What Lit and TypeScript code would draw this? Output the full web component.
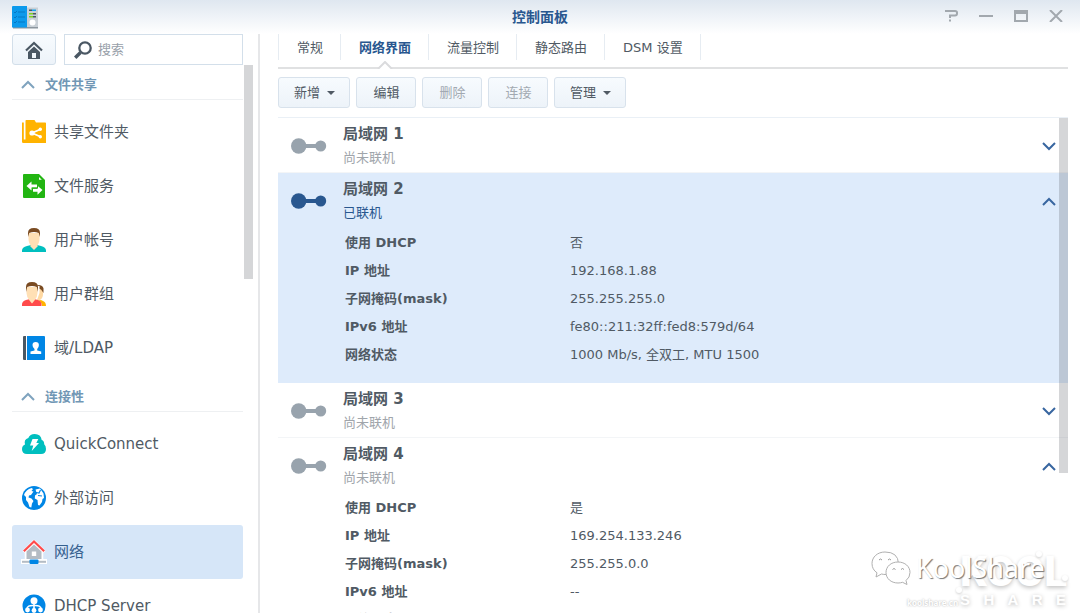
import { LitElement, html, css, svg, nothing } from "lit";
import { customElement, state } from "lit/decorators.js";
import { classMap } from "lit/directives/class-map.js";

interface NavItem { id: string; label: string; }
interface NavGroup { title: string; items: NavItem[]; }
interface Lan { name: string; online: boolean; details: [string, string][]; }

const NAV: NavGroup[] = [
  {
    title: "文件共享",
    items: [
      { id: "folder", label: "共享文件夹" },
      { id: "file", label: "文件服务" },
      { id: "user", label: "用户帐号" },
      { id: "group", label: "用户群组" },
      { id: "ldap", label: "域/LDAP" },
    ],
  },
  {
    title: "连接性",
    items: [
      { id: "quick", label: "QuickConnect" },
      { id: "globe", label: "外部访问" },
      { id: "network", label: "网络" },
      { id: "dhcp", label: "DHCP Server" },
    ],
  },
];

const TABS = ["常规", "网络界面", "流量控制", "静态路由", "DSM 设置"];

const ACTIONS = [
  { label: "新增", menu: true, disabled: false },
  { label: "编辑", menu: false, disabled: false },
  { label: "删除", menu: false, disabled: true },
  { label: "连接", menu: false, disabled: true },
  { label: "管理", menu: true, disabled: false },
];

const LANS: Lan[] = [
  { name: "局域网 1", online: false, details: [] },
  {
    name: "局域网 2",
    online: true,
    details: [
      ["使用 DHCP", "否"],
      ["IP 地址", "192.168.1.88"],
      ["子网掩码(mask)", "255.255.255.0"],
      ["IPv6 地址", "fe80::211:32ff:fed8:579d/64"],
      ["网络状态", "1000 Mb/s, 全双工, MTU 1500"],
    ],
  },
  { name: "局域网 3", online: false, details: [] },
  {
    name: "局域网 4",
    online: false,
    details: [
      ["使用 DHCP", "是"],
      ["IP 地址", "169.254.133.246"],
      ["子网掩码(mask)", "255.255.0.0"],
      ["IPv6 地址", "--"],
      ["网络状态", "--"],
    ],
  },
];

const ICONS: Record<string, unknown> = {
  folder: svg`<path fill="#ffb300" d="M0 2.5h1.8v17H0z M0 19.5h24V23H1.2Q0 23 0 21.8z M3.5 .8Q3.5 0 4.3 0H12.5L14 2.5H23.2Q24 2.5 24 3.3V21H3.5z"/>
    <path fill="none" stroke="#fff" stroke-width="1.8" d="M18 9.5L10 13l8 3.500"/>
    <circle cx="10" cy="13" r="2.6" fill="#fff"/><circle cx="18.300" cy="9.300" r="1.7" fill="#fff"/><circle cx="18.300" cy="16.700" r="1.7" fill="#fff"/>`,
  file: svg`<path fill="#22b512" d="M1 1q0-1 1-1h15l6 6v17q0 1-1 1H2q-1 0-1-1z"/><path fill="#fff" d="M17 3v2.800h2.800z"/>
    <path fill="#fff" d="M4.500 12l5-4.500v3H15v3H9.500v3z M20.500 16l-5-4.300v3H11v3h4.500v3z"/><path stroke="#22b512" stroke-width="1" fill="none" d="M10 14.100h5.500v-3.500"/>`,
  user: svg`<path fill="#00bfbf" d="M0 24v-1.500Q0 19 5 18l4-1h6l4 1q5 1 5 4.500V24z"/><path fill="#ffe0b5" d="M8.500 16h7v2.500L12 22l-3.500-3.500z"/>
    <path fill="#ffe0b5" d="M6.500 5h11v6q0 4.500-3.500 7.500h-4Q6.500 15.500 6.500 11z"/><path fill="#7a4b22" d="M6 9V5q0-5 6-5t6 5v4l-1.200-4Q12 3.200 7.200 5z"/>`,
  group: svg`<path fill="#ffb300" d="M14 24v-5l5-1 2 1q3 1 3 5z"/><path fill="#ffd9a3" d="M14 6h7v6q0 4-3 6h-4z"/><path fill="#7a4b22" d="M13 5q3-3 6-1.500T21.500 8v3L19 7.500z"/>
    <path fill="#fff" d="M20 24.500q0-5.500-5-6.500l2.500-7V4H4v8l3 6z"/><path fill="#ff4b4b" d="M0 24v-1.500Q0 19 4 18l4-1h4l4 1q3.500 1 3.500 4.500V24z"/>
    <path fill="#ffe0b5" d="M4.500 5h11v6q0 4-3 7.500L10 21.500 7.500 18.500Q4.500 15 4.500 11z"/><path fill="#7a4b22" d="M4 10V5q0-5 6-5t6 5v5l-1.200-5Q10 3 5.200 5z"/>`,
  ldap: svg`<path fill="#4a5763" d="M1 1q0-1 1-1h2v24H2q-1 0-1-1z"/><path fill="#0086e5" d="M5 0h17q1 0 1 1v22q0 1-1 1H5z"/>
    <path fill="#fff" d="M10.500 9q0-3 3.200-3t3.200 3q0 2.500-1.700 4v1.500l4 1V18H8.500v-2.500l4-1V13q-2-1.500-2-4z"/>`,
  quick: svg`<path fill="#00bfbf" d="M5 22Q0 22 0 17.300 0 13.700 3 12.600 1.600 7.400 6.300 6 8 2 12.700 2 19 2 19.700 8q2.600.7 2.500 4.300Q24 13.800 24 17q0 5-5 5z"/>
    <path fill="#fff" d="M10.500 7h5.800l-2 4H17l-7.300 8 1.600-5.500H8z"/>`,
  globe: svg`<circle cx="12" cy="12" r="12" fill="#0086e5"/><path fill="#fff" d="M2 9Q4 3.500 9.500 2L11 3 9.500 5 11.500 5.500 9 9 7 9.500 6.500 11.500 9.500 12.500 11.500 15 10 17.500 9.300 21.500 7.500 21 6 16.500 4 14 4 11z M13.500 3.500L18 2.500 21.500 7.500 22 12 20.500 13 20 16 17.500 19.500 16 19 15.500 14 12.800 12.500 13 9.500 15 8z"/>
    <path fill="none" stroke="#0086e5" stroke-width="1.200" d="M14 6.500l3 .5 1.500-3M16 9.500l4 .5"/>`,
  network: svg`<path fill="#fff" stroke="#fff" stroke-width="2.500" stroke-linejoin="round" d="M2 11L12 1l10 10-2 1v7H4v-7z"/><path fill="#b4bcc4" d="M4.500 11.500L12 4.500l7.500 7V19h-15z"/><path fill="#fff" d="M9.800 11.500h4.400V16H9.800z"/>
    <path fill="none" stroke="#ff4b4b" stroke-width="2.200" d="M1.800 11.300L12 1.500l10.200 9.800"/>
    <path fill="#fff" d="M-1 19h26v5H-1z"/><path fill="#b4bcc4" d="M0 20.800h24v2H0z"/><rect x="7.500" y="19.500" width="9" height="4.500" rx="1" fill="#0086e5"/>`,
  dhcp: svg`<circle cx="12" cy="12" r="11.500" fill="#0086e5"/><circle cx="12" cy="6.800" r="3.500" fill="#fff"/>
    <path fill="none" stroke="#fff" stroke-width="1.600" d="M12 8v8M12 11.500Q5 11 5 15M12 11.500q7-.5 7 3.500"/>
    <circle cx="5.500" cy="16" r="2.400" fill="#fff"/><circle cx="12" cy="16.500" r="2.400" fill="#fff"/><circle cx="18.500" cy="16" r="2.400" fill="#fff"/>`,
};

@customElement("app-root")
export class AppRoot extends LitElement {
  @state() private active = "network";
  @state() private tab = 1;
  @state() private selected = 1;
  @state() private open = new Set([1, 3]);

  static styles = css`
    :host {
      display: flex;
      flex-direction: column;
      height: 100vh;
      overflow: hidden;
      position: relative;
      background: linear-gradient(#dfe7f0, #fff 34px);
      color: #505a64;
      font: 13px/24px "DejaVu Sans", "Noto Sans CJK SC", sans-serif;
    }
    * { box-sizing: border-box; }
    button { font: inherit; color: inherit; background: none; border: 0; padding: 0; margin: 0; }
    svg { display: block; flex: none; }

    .titlebar { height: 34px; flex: none; display: grid; grid-template-columns: 1fr auto 1fr; align-items: center; padding: 0 12px; }
    .title { margin: 0; font-size: 14px; font-weight: 700; color: #29578f; }
    .controls { display: flex; justify-content: flex-end; gap: 21px; padding: 0 5px 2px 0; }

    .body { flex: 1; min-height: 0; display: flex; }
    .sidebar { width: 260px; flex: none; position: relative; padding: 0 15px 0 12px; border-right: 2px solid #e6e7e9; overflow: hidden; }
    .tools { display: flex; gap: 8px; height: 31px; }
    .home { width: 44px; display: grid; place-items: center; border: 1px solid #d3dfea; border-radius: 3px; background: linear-gradient(#f7fbfe, #edf3f9); }
    .search { flex: 1; min-width: 0; display: flex; align-items: center; gap: 6px; padding: 0 9px; border: 1px solid #d3dfea; background: #fff; }
    .search input { flex: 1; min-width: 0; border: 0; outline: 0; padding: 0; font: inherit; color: #505a64; background: none; }
    .search input::placeholder { color: #98a0a9; opacity: 1; }

    .group-title { height: 35px; margin: 0; padding: 5px 0 0 9px; border-bottom: 1px solid #eef0f2; display: flex; align-items: center; gap: 10px; font-size: 13px; font-weight: 700; color: #7197b5; }
    .items { list-style: none; margin: 0; padding: 5px 0 2px; }
    .item { height: 54px; display: flex; align-items: center; gap: 8px; padding: 0 10px; border-radius: 3px; font-size: 15px; color: #505a64; text-decoration: none; white-space: nowrap; }
    .item.on { background: #d6e6f8; color: #35608f; }
    .bar { position: absolute; width: 9px; background: rgba(80, 85, 90, 0.24); }
    .side-bar { right: 5px; top: 31px; height: 214px; }

    .main { flex: 1; min-width: 0; padding: 0 12px 0 18px; display: flex; flex-direction: column; }
    .tabs { height: 35px; flex: none; display: flex; align-items: flex-start; border-bottom: 2px solid #e0e1e2; }
    .tab { height: 26px; padding: 2px 17px 0 18px; border-right: 1px solid #e6ecf2; white-space: nowrap; position: relative; }
    .tab:first-child { border-left: 1px solid #e6ecf2; }
    .tab.on { font-weight: 700; color: #29578f; }
    .notch { position: absolute; left: 50%; top: 27px; margin-left: -8px; }
    .actions { display: flex; gap: 6px; padding: 8px 0 9px; flex: none; }
    .action { min-width: 60px; height: 31px; padding: 0 14px 0 15px; display: flex; align-items: center; justify-content: center; gap: 7px; border: 1px solid #d8e2ec; border-radius: 3px; background: linear-gradient(#f7fbfe, #edf3f9); }
    .action:disabled { color: #a2a9b1; }

    .list { flex: 1; min-height: 0; position: relative; overflow: hidden; border-top: 1px solid #eaf0f6; }
    .main-bar { right: 0; top: 0; height: 355px; }
    .lan { border-bottom: 1px solid #f3f5f7; }
    .lan.on { background: #deebfb; border-color: #deebfb; }
    .head { display: flex; align-items: center; padding: 4px 12px 2px 13px; }
    .names { flex: 1; padding-left: 16px; }
    .name { margin: 0; font-size: 15px; line-height: 24px; font-weight: 700; }
    .status { margin: 0; color: #a0a5ab; }
    .status.online { color: #29578f; }
    .details { margin: 0; padding: 2px 12px 13px 67px; display: grid; grid-template-columns: 225px 1fr; line-height: 28px; }
    .details dt { font-weight: 700; }
    .details dd { margin: 0; }

    .mark { position: absolute; right: 12px; bottom: 4px; width: 200px; height: 62px; color: #fff; pointer-events: none; text-shadow: 0 1px 4px #b8b8b8; }
    .kool { position: absolute; right: 1px; top: 4px; font: 900 42px/42px Roboto, sans-serif; text-shadow: 0 2px 4px #c4c4c4; }
    .dots { position: absolute; right: 0; top: 4px; filter: drop-shadow(0 1px 1px #d0d0d0); }
    .spaced { position: absolute; right: 2px; bottom: 0; width: 106px; display: flex; justify-content: space-between; font: 700 15px/18px "Liberation Sans", sans-serif; }
    .site { position: absolute; left: 39px; bottom: 0; font: 700 8px/12px "Noto Sans", sans-serif; text-shadow: 0 0 2px #aaa; }
    .brand { position: absolute; left: 3px; top: 4px; display: flex; align-items: center; gap: 5px; font: 27px/32px "Noto Sans", sans-serif; text-shadow: 1px 1px 1px #777; }
  `;

  private chevron(up: boolean, color: string) {
    return html`<svg width="14" height="9" viewBox="0 0 14 9" aria-hidden="true">
      <path d=${up ? "M1 8l6-6 6 6" : "M1 1l6 6 6-6"} fill="none" stroke=${color} stroke-width="2" /></svg>`;
  }

  private toggle(i: number) {
    const next = new Set(this.open);
    next.has(i) ? next.delete(i) : next.add(i);
    this.open = next;
  }

  private renderTitlebar() {
    return html`<header class="titlebar">
      <svg width="27" height="23" viewBox="0 0 27 23" aria-hidden="true">
        <path fill="#c9d0d6" d="M14 1.500h12v20H14z" /><path fill="#8c969e" d="M1 21h25v1.500H1z" />
        <path fill="#0c9aec" d="M0 1q0-1 1-1h14v21.500H0z" />
        <path stroke="#0578c4" fill="none" d="M2 6l1 1 2-2M6 6h7M2 11l1 1 2-2M6 11h7M2 16l1 1 2-2M6 16h7" />
        <path fill="#4a5763" d="M17 3.500h3V5h-3zM21 7h3v1.500h-3zM21 10h3v1.500h-3z" /><path fill="#12a7f0" d="M20 3.500h4V5h-4z" />
        <path fill="#7ed321" d="M17 7h4v1.500h-4zM17 10h4v1.500h-4z" /><circle cx="20.500" cy="16.500" r="3" fill="#fff" />
      </svg>
      <h1 class="title">控制面板</h1>
      <div class="controls">
        <button aria-label="帮助"><svg width="14" height="12" viewBox="0 0 14 12"><path fill="none" stroke="#a2a8ae" stroke-width="2" d="M1 1h10q2 0 2 1.500v1Q13 5.500 11 5.500H6V8M6 9.500v2" /></svg></button>
        <button aria-label="最小化"><svg width="14" height="12" viewBox="0 0 14 12"><path fill="#a2a8ae" d="M0 5h14v2H0z" /></svg></button>
        <button aria-label="最大化"><svg width="14" height="12" viewBox="0 0 14 12"><path fill="#a2a8ae" fill-rule="evenodd" d="M0 0h14v12H0zM2 4h10v6H2z" /></svg></button>
        <button aria-label="关闭"><svg width="14" height="12" viewBox="0 0 14 12"><path stroke="#a2a8ae" stroke-width="2" d="M1 0l12 12M13 0L1 12" /></svg></button>
      </div>
    </header>`;
  }

  private renderSidebar() {
    return html`<nav class="sidebar">
      <div class="tools">
        <button class="home" aria-label="首页">
          <svg width="18" height="18" viewBox="0 0 18 18"><path fill="#4a5763" fill-rule="evenodd" d="M3 11l6-5.500 6 5.500v7H3zM7 12v5h4v-5z" /><path fill="none" stroke="#4a5763" stroke-width="2.200" d="M1 9.500l8-7.500 8 7.500" /></svg>
        </button>
        <label class="search">
          <svg width="18" height="18" viewBox="0 0 18 18" role="img" aria-label="搜索"><circle cx="11" cy="7" r="5.700" fill="none" stroke="#4a5763" stroke-width="2.300" /><path stroke="#4a5763" stroke-width="3.400" d="M1.200 16.800l5.300-5.300" /></svg>
          <input type="search" placeholder="搜索" />
        </label>
      </div>
      ${NAV.map((g) => html`
        <h2 class="group-title">${this.chevron(true, "#7fa3be")}${g.title}</h2>
        <ul class="items">
          ${g.items.map((n) => html`<li>
            <a href="#${n.id}" class=${classMap({ item: true, on: n.id === this.active })} @click=${() => (this.active = n.id)}>
              <svg width="24" height="24" viewBox="0 0 24 24" overflow="visible" aria-hidden="true">${ICONS[n.id]}</svg>${n.label}</a>
          </li>`)}
        </ul>`)}
      <div class="bar side-bar"></div>
    </nav>`;
  }

  private renderLan(l: Lan, i: number) {
    const open = this.open.has(i);
    const on = i === this.selected;
    const color = l.online ? "#29578f" : "#98a3ad";
    return html`<section class=${classMap({ lan: true, on })} @click=${() => (this.selected = i)}>
      <div class="head">
        <svg width="36" height="16" viewBox="0 0 36 16" aria-hidden="true"><circle cx="7.700" cy="8" r="7.700" fill=${color} /><path fill=${color} d="M12 6h16v4H12z" /><circle cx="29.700" cy="8" r="5.500" fill=${color} /></svg>
        <div class="names">
          <h3 class="name">${l.name}</h3>
          <p class=${classMap({ status: true, online: l.online })}>${l.online ? "已联机" : "尚未联机"}</p>
        </div>
        <button aria-label=${open ? "收起" : "展开"} @click=${() => this.toggle(i)}>${this.chevron(open, "#3866a0")}</button>
      </div>
      ${open && l.details.length
        ? html`<dl class="details">${l.details.map(([k, v]) => html`<dt>${k}</dt><dd>${v}</dd>`)}</dl>`
        : nothing}
    </section>`;
  }

  private renderMark() {
    return html`<div class="mark">
      <div class="kool">KOOL</div>
      <svg class="dots" width="112" height="44" viewBox="0 0 112 44" aria-hidden="true">
        <circle cx="83" cy="3" r="3" fill="#fff" /><circle cx="109" cy="27" r="3" fill="#fff" /><circle cx="3" cy="39" r="3" fill="#fff" />
      </svg>
      <div class="spaced">${[..."SHARE"].map((c) => html`<span>${c}</span>`)}</div>
      <div class="site">koolshare.cn</div>
      <div class="brand">
        <svg width="40" height="34" viewBox="0 0 40 34" aria-hidden="true">
          <g fill="#fff" stroke="#b0b0b0" stroke-width="1">
            <path d="M14 1C6.500 1 1 6 1 12.500q0 6 5 9.300L5 26l5.500-3q2 .6 5 .5Q27 22 27.500 12.500 27 1 14 1z" />
            <path d="M27 11c-7 0-12 4.500-12 10.500S20 32 27 32q2.500 0 4.500-.7L36 33.500l-1-4q4-3 4-8C39 15.500 34 11 27 11z" />
          </g>
          <path fill="none" stroke="#999" d="M8 9q1.500-2 3 0M17 9q1.500-2 3 0M21.500 18.500q1.500-2 3 0M30 18.500q1.500-2 3 0" />
        </svg>KoolShare
      </div>
    </div>`;
  }

  render() {
    return html`${this.renderTitlebar()}
      <div class="body">
        ${this.renderSidebar()}
        <main class="main">
          <div class="tabs" role="tablist">
            ${TABS.map((t, i) => html`<button role="tab" aria-selected=${i === this.tab} class=${classMap({ tab: true, on: i === this.tab })} @click=${() => (this.tab = i)}>${t}${i === this.tab
              ? html`<svg class="notch" width="16" height="8" viewBox="0 0 16 8" aria-hidden="true"><path fill="#fff" d="M1 8l7-7 7 7z" /><path fill="none" stroke="#dadbdd" stroke-width="2" d="M1 8l7-7 7 7" /></svg>`
              : nothing}</button>`)}
          </div>
          <div class="actions">
            ${ACTIONS.map((a) => html`<button class="action" ?disabled=${a.disabled}>${a.label}${a.menu
              ? html`<svg width="8" height="4" viewBox="0 0 8 4" aria-hidden="true"><path fill="#505a64" d="M0 0h8L4 4z" /></svg>`
              : nothing}</button>`)}
          </div>
          <div class="list">
            ${LANS.map((l, i) => this.renderLan(l, i))}
            <div class="bar main-bar"></div>
          </div>
        </main>
      </div>
      ${this.renderMark()}`;
  }
}
